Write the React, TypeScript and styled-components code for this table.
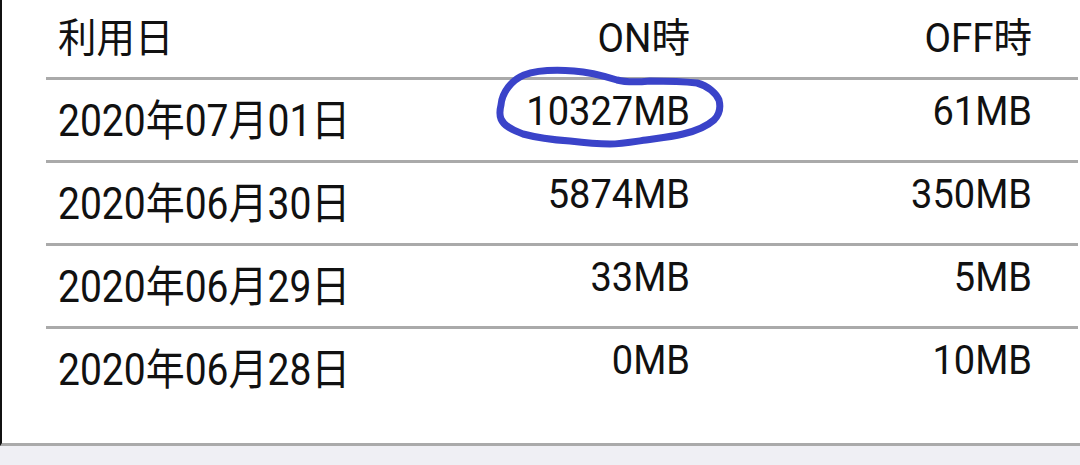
import styled, { createGlobalStyle } from "styled-components";

const GlobalStyle = createGlobalStyle`
  html, body {
    margin: 0;
    padding: 0;
    background: #efeff4;
  }
  body {
    font-family: Roboto, "Noto Sans CJK JP", sans-serif;
    color: #111;
  }
`;

const rows = [
  { date: "2020年07月01日", on: "10327MB", off: "61MB" },
  { date: "2020年06月30日", on: "5874MB", off: "350MB" },
  { date: "2020年06月29日", on: "33MB", off: "5MB" },
  { date: "2020年06月28日", on: "0MB", off: "10MB" },
];

export default function App() {
  return (
    <Page>
      <GlobalStyle />
      <Sheet>
        <Table>
          <HeaderRow>
            <HeadCell>利用日</HeadCell>
            <HeadCell $right>ON時</HeadCell>
            <HeadCell $right>OFF時</HeadCell>
          </HeaderRow>
          {rows.map((r, i) => (
            <Row key={r.date} $last={i === rows.length - 1}>
              <DateCell>{r.date}</DateCell>
              <SizeCell>{r.on}</SizeCell>
              <SizeCell>{r.off}</SizeCell>
            </Row>
          ))}
        </Table>
      </Sheet>
      {/* hand-drawn marker around the first ON value */}
      <Circle viewBox="0 0 1080 465">
        <path
          d="M501 105 C502 92 512 80 524 75 C540 69 560 70 574 71 C590 72 604 76 617 80 C628 83 640 82 650 81 C668 81 688 82 697 83 C708 86 716 93 719 100 C721 108 719 115 714 120 C706 127 696 131 683 134 C670 137 660 138 646 140 C632 142 620 144 610 144 C598 144 586 143 570 141 C556 140 538 138 523 134 C512 130 504 126 501 119 C499 114 500 109 501 105 Z"
          fill="none"
          stroke="#3a43c9"
          strokeWidth="7"
          strokeLinecap="round"
          strokeLinejoin="round"
        />
      </Circle>
    </Page>
  );
}

const Page = styled.div`
  position: relative;
  width: 1080px;
  height: 465px;
  overflow: hidden;
  background: #efeff4;
`;

const Sheet = styled.div`
  background: #fff;
  border-left: 2px solid #111;
  border-bottom: 3px solid #aaa;
  padding: 0 2px 34px 44px;
  box-sizing: border-box;
  height: 446px;
`;

const Table = styled.div`
  display: flex;
  flex-direction: column;
`;

const BaseRow = styled.div`
  display: grid;
  grid-template-columns: 334px 298px 342px;
  padding: 0 46px 0 12px;
  align-items: center;
`;

const HeaderRow = styled(BaseRow)`
  height: 77px;
  border-bottom: 3px solid #aaa;
`;

const Row = styled(BaseRow)<{ $last?: boolean }>`
  height: 80px;
  border-bottom: ${(p) => (p.$last ? "none" : "3px solid #aaa")};
`;

const HeadCell = styled.div<{ $right?: boolean }>`
  font-size: 38.5px;
  line-height: 1;
  text-align: ${(p) => (p.$right ? "right" : "left")};
  white-space: nowrap;
  transform: scaleY(1.04);
`;

const DateCell = styled.div`
  font-size: 39px;
  line-height: 1;
  white-space: nowrap;
  padding-top: 2px;
  transform: scaleY(1.12);
`;

const SizeCell = styled.div`
  font-size: 38px;
  line-height: 1;
  text-align: right;
  white-space: nowrap;
  padding-bottom: 17px;
  transform: scaleY(1.05);
`;

const Circle = styled.svg`
  position: absolute;
  left: 0;
  top: 0;
  width: 1080px;
  height: 465px;
  pointer-events: none;
`;
